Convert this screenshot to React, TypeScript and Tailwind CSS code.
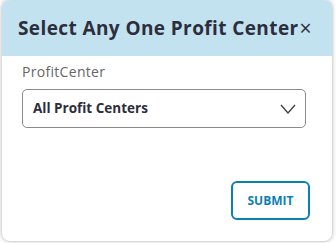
export default function App() {
    return (
        <div className="w-[336px] h-[243px] bg-white overflow-hidden" style={{ fontFamily: '"Open Sans", "Liberation Sans", sans-serif' }}>
            <div className="ml-[2px] w-[330px] h-[241px] bg-white rounded-lg shadow-[0_0_4px_rgba(0,0,0,0.35)] overflow-hidden flex flex-col">
                {/* header */}
                <div className="h-[56px] bg-[#c2e2f0] flex items-center pl-[16px]">
                    <h2 className="text-[19px] font-bold text-[#2c2e3b] tracking-[0.4px]">Select Any One Profit Center</h2>
                    <span className="ml-[1px] text-[21px] text-[#2c2e3b] leading-none">×</span>
                </div>

                <div className="px-[20px] pt-[5px]">
                    <label className="block text-[14px] text-[#666] tracking-[0.3px] mb-[7px]">ProfitCenter</label>
                    <div className="w-[284px] h-[39px] border border-[#8a8a8a] rounded-[5px] flex items-center justify-between pl-[10px] pr-[9px]">
                        <span className="text-[13.5px] font-bold text-[#2c2e3b]">All Profit Centers</span>
                        <svg width="16" height="10" viewBox="0 0 16 10" fill="none" stroke="#444" strokeWidth="1.4">
                            <polyline points="1,1 8,9 15,1" />
                        </svg>
                    </div>
                </div>

                <div className="flex justify-end pr-[22px] mt-[53px]">
                    <button className="w-[79px] h-[39px] border-2 border-[#0b80b3] rounded-[6px] text-[12px] font-bold text-[#0b80b3]">
                        SUBMIT
                    </button>
                </div>
            </div>
        </div>
    );
}
